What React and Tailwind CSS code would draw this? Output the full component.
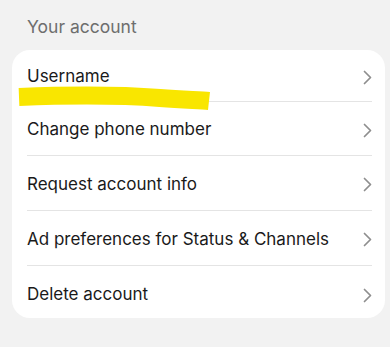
import React from 'react';

const items = [
  { label: 'Username', h: 'h-[52px]' },
  { label: 'Change phone number', h: 'h-[54px]' },
  { label: 'Request account info', h: 'h-[55px]' },
  { label: 'Ad preferences for Status & Channels', h: 'h-[55px]' },
  { label: 'Delete account', h: 'h-[52px]' },
];

const Chevron = () => (
  <svg width="9" height="15" viewBox="0 0 9 15" fill="none" className="shrink-0">
    <path d="M1.5 1.5 L7.5 7.5 L1.5 13.5" stroke="#8e8e8e" strokeWidth="1.7" strokeLinecap="round" strokeLinejoin="round" />
  </svg>
);

export default function App() {
  return (
    <div className="relative w-[390px] h-[347px] bg-[#f2f2f2] font-['Inter',sans-serif] overflow-hidden">
      {/* Section header */}
      <div className="pl-[27px] pt-[14px] h-[50px] text-[17.5px] text-[#6e6e6e]">
        Your account
      </div>

      {/* Card */}
      <div className="ml-[12px] w-[373px] h-[268px] bg-white rounded-[18px] pl-[15px] pr-[13px]">
        {items.map((item, i) => (
          <div
            key={item.label}
            className={`${item.h} flex items-center justify-between ${i === 4 ? 'pt-[6px]' : 'pt-[3px]'} ${i < items.length - 1 ? 'border-b border-[#e4e4e4]' : ''}`}
          >
            <span className="text-[17px] text-[#1a1a1a]">{item.label}</span>
            <Chevron />
          </div>
        ))}
      </div>

      {/* Yellow marker scribble */}
      <svg className="absolute left-0 top-0 pointer-events-none" width="390" height="347">
        <path
          d="M19 97 C 70 95, 120 95, 160 98 C 185 100, 200 100, 209 101"
          stroke="#f9e600"
          strokeWidth="18"
          strokeLinecap="butt"
          fill="none"
        />
      </svg>
    </div>
  );
}
